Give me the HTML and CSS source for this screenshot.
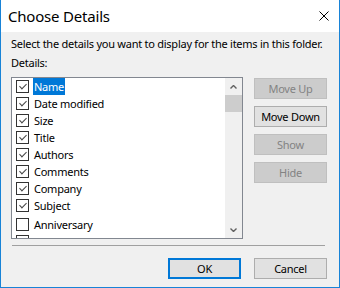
FILE: index.html
```html
<!DOCTYPE html>
<html>
<head>
  <meta charset="UTF-8">
  <title>Choose Details</title>
  <link rel="stylesheet" href="styles.css">
</head>
<body>

  <div class="dialog">
    <div class="titlebar">
      <span class="title">Choose Details</span>
      <svg class="close" width="10" height="10" viewBox="0 0 10 10">
        <path d="M0.5 0.5 L9.5 9.5 M9.5 0.5 L0.5 9.5" stroke="#000" stroke-width="1" fill="none"/>
      </svg>
    </div>

    <div class="content">
      <p class="intro">Select the details you want to display for the items in this folder.</p>
      <p class="label">Details:</p>

      <div class="main">
        <div class="listbox">
          <ul class="items">
            <li class="item"><span class="box on"></span><span class="name selected">Name</span></li>
            <li class="item"><span class="box on"></span><span class="name">Date modified</span></li>
            <li class="item"><span class="box on"></span><span class="name">Size</span></li>
            <li class="item"><span class="box on"></span><span class="name">Title</span></li>
            <li class="item"><span class="box on"></span><span class="name">Authors</span></li>
            <li class="item"><span class="box on"></span><span class="name">Comments</span></li>
            <li class="item"><span class="box on"></span><span class="name">Company</span></li>
            <li class="item"><span class="box on"></span><span class="name">Subject</span></li>
            <li class="item"><span class="box"></span><span class="name">Anniversary</span></li>
            <li class="item partial"><span class="box"></span></li>
          </ul>
          <div class="scrollbar">
            <div class="arrow">
              <svg width="7" height="4" viewBox="0 0 7 4"><path d="M0.5 3.5 L3.5 0.5 L6.5 3.5" stroke="#606060" stroke-width="1.4" fill="none"/></svg>
            </div>
            <div class="thumb"></div>
            <div class="track"></div>
            <div class="arrow">
              <svg width="7" height="4" viewBox="0 0 7 4"><path d="M0.5 0.5 L3.5 3.5 L6.5 0.5" stroke="#606060" stroke-width="1.4" fill="none"/></svg>
            </div>
          </div>
        </div>

        <div class="side">
          <button class="btn" disabled>Move Up</button>
          <button class="btn">Move Down</button>
          <button class="btn" disabled>Show</button>
          <button class="btn" disabled>Hide</button>
        </div>
      </div>

      <div class="separator"></div>

      <div class="footer">
        <button class="btn default">OK</button>
        <button class="btn">Cancel</button>
      </div>
    </div>
  </div>

</body>
</html>
```

FILE: styles.css
```css
html, body { margin: 0; padding: 0; }
body { font-family: "Noto Sans", sans-serif; font-size: 11px; letter-spacing: -0.25px; color: #000; }

.dialog { width: 340px; height: 288px; box-sizing: border-box; border: 1px solid #1883d7; border-top: none; background: #f0f0f0; display: flex; flex-direction: column; overflow: hidden; }

.titlebar { height: 32px; background: #fff; display: flex; align-items: center; justify-content: space-between; padding: 0 10px 0 7px; flex-shrink: 0; }
.title { font-size: 15px; letter-spacing: -0.2px; line-height: 20px; padding-bottom: 1px; }
.close { margin-top: -1px; }

.content { padding: 4px 12px 0 10px; }
.intro { margin: 0; line-height: 16px; height: 16px; white-space: nowrap; }
.label { margin: 3px 0 0; line-height: 16px; height: 16px; }

.main { display: flex; margin-top: 6px; gap: 11px; }

.listbox { width: 233px; height: 162px; box-sizing: border-box; border: 1px solid #828790; background: #fff; display: flex; overflow: hidden; }
.items { list-style: none; margin: 0; padding: 0 0 0 4px; flex: 1; overflow: hidden; }
.item { height: 17px; display: flex; align-items: center; white-space: nowrap; }
.item:nth-child(9) { margin-top: 1px; height: 18px; }
.item.partial { align-items: flex-start; padding-top: 2px; }
.box { width: 13px; height: 13px; box-sizing: border-box; border: 1px solid #333; flex-shrink: 0; margin-right: 4px; position: relative; }
.box.on::after { content: ""; position: absolute; left: 2px; top: 0px; width: 6px; height: 3px; border-left: 1.3px solid #444; border-bottom: 1.3px solid #444; transform: translate(0.5px, 2.5px) rotate(-45deg); }
.name { padding: 0 1px; line-height: 17px; }
.name.selected { background: #0078d7; color: #fff; }

.scrollbar { width: 17px; background: #f0f0f0; display: flex; flex-direction: column; }
.arrow { height: 17px; display: flex; align-items: center; justify-content: center; }
.thumb { height: 17px; background: #cdcdcd; }
.track { flex: 1; }

.side { display: flex; flex-direction: column; gap: 7px; padding-top: 1px; }

.btn { width: 73px; height: 21px; box-sizing: border-box; border: 1px solid #adadad; background: #e1e1e1; font: inherit; letter-spacing: inherit; color: #000; padding: 0; line-height: 17px; }
.btn:disabled { background: #cccccc; border-color: #bfbfbf; color: #838383; }
.btn.default { border: 2px solid #0078d7; }

.separator { height: 1px; background: #a0a0a0; margin: 6px 2px 0 1px; }

.footer { display: flex; justify-content: flex-end; gap: 13px; margin-top: 12px; }
```
